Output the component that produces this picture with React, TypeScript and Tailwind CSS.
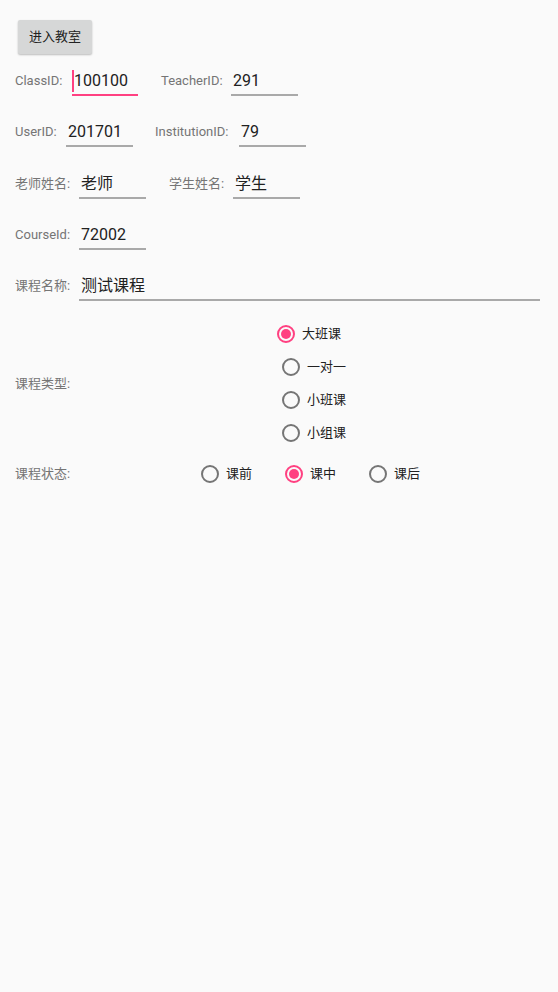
import React from "react";

const FONT = { fontFamily: 'Roboto, "Noto Sans CJK SC", sans-serif' };

function Label({ w, children }: { w: number; children: React.ReactNode }) {
  return (
    <div
      className="mt-[1px] h-[20px] leading-[20px] text-[13px] text-[#757575] whitespace-nowrap shrink-0"
      style={{ width: w }}
    >
      {children}
    </div>
  );
}

function Field({ w, value, focused }: { w: number; value: string; focused?: boolean }) {
  return (
    <div className="shrink-0 flex flex-col" style={{ width: w }}>
      <div className="mt-[1px] h-[20px] leading-[20px] text-[16px] text-[#212121] flex items-center whitespace-nowrap">
        {focused ? (
          <>
            <span className="inline-block w-[2px] h-[22px] bg-[#ff4081]" />
            <span>{value}</span>
          </>
        ) : (
          <span className="pl-[2px]">{value}</span>
        )}
      </div>
      <div
        className={
          focused
            ? "mt-[3px] h-[2px] bg-[#ff4081]"
            : "mt-[3px] h-[2px] bg-[#a9a9a9]"
        }
      />
    </div>
  );
}

function Radio({ checked, label }: { checked?: boolean; label: string }) {
  return (
    <div className="flex items-center">
      <div
        className={
          checked
            ? "w-[18px] h-[18px] rounded-full border-2 border-[#ff4081] flex items-center justify-center"
            : "w-[18px] h-[18px] rounded-full border-2 border-[#757575]"
        }
      >
        {checked && <div className="w-[10px] h-[10px] rounded-full bg-[#ff4081]" />}
      </div>
      <span className="ml-[7px] text-[13px] text-[#212121] leading-[18px]">{label}</span>
    </div>
  );
}

export default function App() {
  return (
    <div className="w-[558px] h-[992px] bg-[#fafafa] relative overflow-hidden" style={FONT}>
      <div className="pt-[20px] pl-[18px]">
        <button className="w-[74px] h-[34px] rounded-[2px] bg-[#d6d7d7] text-[13px] text-[#222] shadow-[0_1px_2px_rgba(0,0,0,0.25)]">
          进入教室
        </button>
      </div>

      <div className="pl-[15px] mt-[16px] flex flex-col gap-[25px]">
        <div className="flex items-start">
          <Label w={57}>ClassID:</Label>
          <Field w={66} value="100100" focused />
          <div className="w-[23px] shrink-0" />
          <Label w={70}>TeacherID:</Label>
          <Field w={67} value="291" />
        </div>
        <div className="flex items-start">
          <Label w={51}>UserID:</Label>
          <Field w={67} value="201701" />
          <div className="w-[22px] shrink-0" />
          <Label w={84}>InstitutionID:</Label>
          <Field w={67} value="79" />
        </div>
        <div className="flex items-start mt-[1px]">
          <Label w={64}>老师姓名:</Label>
          <Field w={67} value="老师" />
          <div className="w-[23px] shrink-0" />
          <Label w={64}>学生姓名:</Label>
          <Field w={67} value="学生" />
        </div>
        <div className="flex items-start">
          <Label w={64}>CourseId:</Label>
          <Field w={67} value="72002" />
        </div>
        <div className="flex items-start">
          <Label w={64}>课程名称:</Label>
          <Field w={461} value="测试课程" />
        </div>
      </div>

      <div className="pl-[15px] mt-[16px] flex items-center">
        <Label w={267}>课程类型:</Label>
        <div className="flex flex-col">
          <div className="h-[33px] flex items-center -ml-[5px]">
            <Radio checked label="大班课" />
          </div>
          <div className="h-[33px] flex items-center">
            <Radio label="一对一" />
          </div>
          <div className="h-[33px] flex items-center">
            <Radio label="小班课" />
          </div>
          <div className="h-[33px] flex items-center">
            <Radio label="小组课" />
          </div>
        </div>
      </div>

      <div className="pl-[15px] mt-[8px] h-[33px] flex items-center">
        <Label w={186}>课程状态:</Label>
        <div className="w-[84px] shrink-0">
          <Radio label="课前" />
        </div>
        <div className="w-[84px] shrink-0">
          <Radio checked label="课中" />
        </div>
        <div className="w-[84px] shrink-0">
          <Radio label="课后" />
        </div>
      </div>
    </div>
  );
}
